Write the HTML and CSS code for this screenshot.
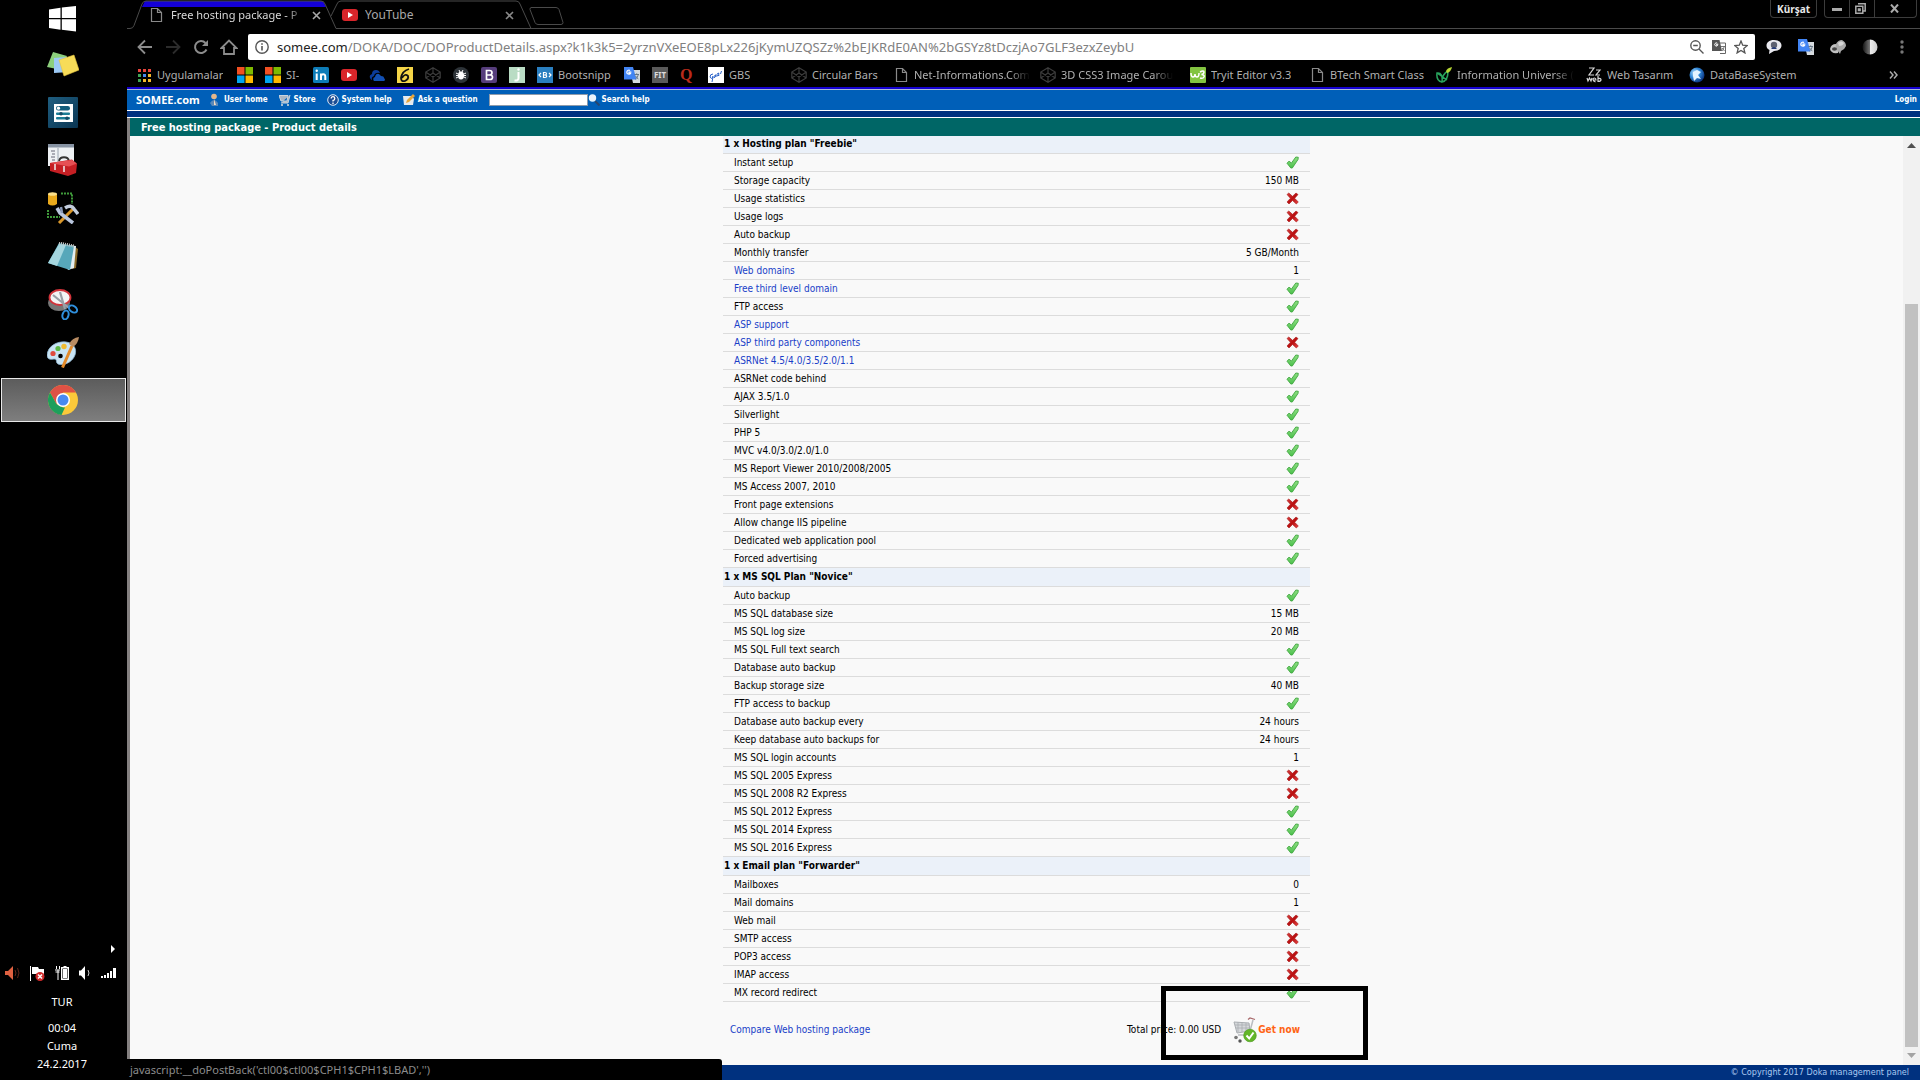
FILE: index.html
```
<!DOCTYPE html>
<html lang="tr">
<head>
<meta charset="utf-8">
<title>Free hosting package - Product details</title>
<link rel="stylesheet" href="styles.css">
</head>
<body>
<svg class="defs" aria-hidden="true">
  <defs>
    <linearGradient id="gTick" x1="0" y1="0" x2="0" y2="1"><stop offset="0" stop-color="#8fe083"/><stop offset="1" stop-color="#4cc04c"/></linearGradient>
    <linearGradient id="gCross" x1="0" y1="0" x2="1" y2="1"><stop offset="0" stop-color="#d84040"/><stop offset=".5" stop-color="#b80f10"/><stop offset="1" stop-color="#e84848"/></linearGradient>
    <linearGradient id="gPane" x1="0" y1="0" x2="1" y2="1"><stop offset="0" stop-color="#1f5e80"/><stop offset="1" stop-color="#0a3552"/></linearGradient>
    <radialGradient id="gGlobe" cx=".35" cy=".35" r=".7"><stop offset="0" stop-color="#bfe6ff"/><stop offset=".5" stop-color="#2e86d6"/><stop offset="1" stop-color="#0a2f78"/></radialGradient>
    <linearGradient id="gHalf"><stop offset="0" stop-color="#111"/><stop offset=".5" stop-color="#777"/><stop offset=".5" stop-color="#eee"/><stop offset="1" stop-color="#ccc"/></linearGradient>
  </defs>
  <symbol id="tick" viewBox="0 0 13 13"><path d="M1 7.2 3.2 5l2.1 2.2L9.800 1l2.500.3-.3 2.200L6.300 12H4.800z" fill="url(#gTick)" stroke="#3fa63f" stroke-width=".9" stroke-linejoin="round"/></symbol>
  <symbol id="cross" viewBox="0 0 13 13"><path d="M1 2.500 2.800 1 6.500 4.300 10 1l2 1.600L8.700 6.300 12.300 10l-2 2-3.800-3.500L3 12 1 10l3.400-3.700z" fill="url(#gCross)" stroke="#a81717" stroke-width=".6"/></symbol>
  <symbol id="page" viewBox="0 0 16 16"><path d="M3.500 1.500h6l4 4v9h-10zM9.500 1.500v4h4" fill="none" stroke="#8a8a8a" stroke-width="1.200"/></symbol>
  <symbol id="ms" viewBox="0 0 16 16"><path d="M0 0h7.500v7.500H0z" fill="#f25022"/><path d="M8.500 0H16v7.500H8.500z" fill="#7fba00"/><path d="M0 8.500h7.500V16H0z" fill="#00a4ef"/><path d="M8.500 8.500H16V16H8.500z" fill="#ffb900"/></symbol>
  <symbol id="yt" viewBox="0 0 16 16"><rect y="2" width="16" height="12" rx="3" fill="#d9252a"/><path d="M6 5l5 3-5 3z" fill="#fff"/></symbol>
  <symbol id="codepen" viewBox="0 0 16 16"><path d="M8 .8 15.200 5v6L8 15.200.8 11V5zM.8 5 8 10l7.200-5M.8 11 8 6l7.200 5M8 .8V6M8 10v5.200" fill="none" stroke="#3c3c3c" stroke-width="1.200"/></symbol>
  <symbol id="gtr" viewBox="0 0 16 16"><path d="M6 3h10v13H9z" fill="#d5dade"/><path d="M0 0h9l3.500 12.500H0z" fill="#4285f4"/><path d="M7.300 5H5v1.300h1.500A2 2 0 1 1 6 3.600" fill="none" stroke="#fff" stroke-width="1.200"/><path d="M10.500 7.500H15M12.700 6.300v1.200M14.200 7.500c-.3 2-1.200 3.500-2.800 4.700M11.400 8.800l2.900 3.400" fill="none" stroke="#607080" stroke-width=".9"/></symbol>
</svg>

<div class="screen">
  <aside class="taskbar">
    <nav class="apps" aria-label="Taskbar">
      <button class="app start" aria-label="Start"><svg width="27" height="26" viewBox="0 0 27 26" fill="#fff"><path d="M0 3.500 11.500 1.800V12H0zM12.800 1.600 27 0v12H12.800zM0 13.200h11.500v10.500L0 22zM12.800 13.200H27V25.500l-14.200-1.800z"/></svg></button>
      <button class="app" aria-label="Sticky notes"><svg width="32" height="26" viewBox="0 0 32 26"><path d="M6 1l14 4-5 14L0 16z" fill="#8ccf7c"/><path d="M7 7l13-1 2 15-15 1z" fill="#9cc9f5"/><path d="M12 9l15-5 5 15-15 6z" fill="#f7dc58" stroke="#e3c23c" stroke-width=".6"/></svg></button>
      <button class="app" aria-label="Settings"><svg width="30" height="31" viewBox="0 0 30 31"><rect width="30" height="31" rx="1" fill="url(#gPane)"/><rect x="6" y="7" width="19" height="18" fill="#fff"/><rect x="8" y="9" width="14" height="4.500" rx="2.200" fill="#125d7c"/><rect x="8" y="15.500" width="14" height="2.500" rx="1" fill="#1b7d96"/><rect x="8" y="20" width="14" height="2.500" rx="1" fill="#1b7d96"/><circle cx="10.500" cy="11.200" r="1.600" fill="#fff"/><circle cx="13" cy="16.700" r="1.800" fill="#134b66"/><circle cx="19" cy="21.200" r="1.800" fill="#134b66"/></svg></button>
      <button class="app" aria-label="Toolbox"><svg width="30" height="32" viewBox="0 0 30 32"><path d="M0 0h26v22H0z" fill="#eef1f4"/><path d="M0 0h26v3.500H0z" fill="#8793a3"/><path d="M3 7h4M4 10h3M3 13h4M4 16h3" stroke="#667" stroke-width="1"/><path d="M10 4v16" stroke="#9aa4b0"/><path d="M11 17c1-5 9-5 10 0" fill="none" stroke="#333" stroke-width="1.800"/><path d="M2 19l22-3.500L29 20l-1 9-8 3-18-5z" fill="#c51f24"/><path d="M2 19l19 3.500 8-3-5-3.500z" fill="#e65054"/><path d="M7 20v6M16 22v6" stroke="#eee" stroke-width="1.500"/></svg></button>
      <button class="app" aria-label="Database tools"><svg width="32" height="32" viewBox="0 0 32 32"><path d="M1 2v10q4.500 3 9 0V2z" fill="#e9a91c"/><ellipse cx="5.500" cy="2" rx="4.500" ry="1.800" fill="#fbe08a"/><path d="M14 1.500h11V12M1 18v7h12" fill="none" stroke="#3f9a3a" stroke-width="2" stroke-dasharray="2 1"/><path d="M12 31 26 17" stroke="#d8962a" stroke-width="3"/><path d="M18 16q6-4 9 1l4 5" fill="none" stroke="#c3cddd" stroke-width="3.500"/><path d="M10 16l3 5 13 10" fill="none" stroke="#b9c6de" stroke-width="3.500"/><path d="M14 15l1 6" stroke="#8898b8" stroke-width="2.500"/></svg></button>
      <button class="app" aria-label="Notepad"><svg width="30" height="29" viewBox="0 0 30 29"><path d="M24 3l6 4-2 19-4 1z" fill="#8a6a28"/><path d="M11 2l17 2-2 22-6 2z" fill="#e3eef0"/><path d="M11 1l15 3-4 24L0 21z" fill="#57a7ba"/><path d="M11 2l7 1-9 21-9-3z" fill="#a5d6df"/><path d="M11 1l15 3" stroke="#c9c9c9" stroke-width="3" stroke-dasharray="1 1"/></svg></button>
      <button class="app" aria-label="Snipping tool"><svg width="30" height="31" viewBox="0 0 30 31"><ellipse cx="11" cy="14" rx="11" ry="8" fill="#777"/><ellipse cx="12" cy="8.500" rx="10.500" ry="7.500" fill="#f4f4f4" stroke="#d2333a" stroke-width="1.800"/><path d="M5 6l16 13M12 3l5 17" stroke="#9a9fa6" stroke-width="2.200"/><ellipse cx="25" cy="20" rx="4.500" ry="3" transform="rotate(35 25 20)" fill="none" stroke="#2f8fdc" stroke-width="2"/><ellipse cx="17.500" cy="26" rx="3" ry="4.500" transform="rotate(15 17.500 26)" fill="none" stroke="#2f8fdc" stroke-width="2"/></svg></button>
      <button class="app" aria-label="Paint"><svg width="32" height="31" viewBox="0 0 32 31"><path d="M0 18C1 9 10 4 19 5c8 1 11 7 9 13-3 8-12 11-17 9-3-2 0-5-4-5-4 1-7 0-7-4z" fill="#c9e4f4" stroke="#8fb9d6" stroke-width=".8"/><circle cx="6" cy="16.500" r="2.600" fill="#df4b3e"/><circle cx="11" cy="11.500" r="2.600" fill="#5cb946"/><circle cx="17" cy="9.500" r="2.700" fill="#efbb32"/><circle cx="13.500" cy="19" r="2.300" fill="#000"/><path d="M15.500 30.500 25 9" stroke="#e38a2a" stroke-width="3"/><path d="M22 7q3-6 10-7-1 7-6 10z" fill="#b98c62"/></svg></button>
      <button class="app active" aria-label="Chrome"><svg width="30" height="30" viewBox="0 0 30 30"><circle cx="15" cy="15" r="15" fill="#fbc93a"/><path d="M2 7.500A15 15 0 0 1 28 7.500H15L8.500 19z" fill="#de5145"/><path d="M2 7.500 8.500 19 15 22.500h2L13.500 30A15 15 0 0 1 2 7.500z" fill="#1d9f5c"/><circle cx="15" cy="15" r="7" fill="#fff"/><circle cx="15" cy="15" r="5.500" fill="#4889f1"/></svg></button>
    </nav>
    <div class="tray">
      <button class="expand" aria-label="Show hidden icons"><svg width="4" height="8" viewBox="0 0 4 8"><path d="M0 0v8l4-4z" fill="#fff"/></svg></button>
      <div class="tray-icons">
        <svg width="15" height="14" viewBox="0 0 15 14"><path d="M0 5h3l5-5v14L3 9H0z" fill="#df6141"/><path d="M10 4q2 3 0 6M12.500 2q3 5 0 10" fill="none" stroke="#5a2418"/></svg>
        <svg width="15" height="15" viewBox="0 0 15 15"><path d="M.5 0v15" stroke="#fff"/><path d="M2 1h6l1 2h5v6H8L7 8H2z" fill="#fff"/><circle cx="10" cy="10.500" r="4.500" fill="#d12a2a"/><path d="M8 8.500l4 4M12 8.500l-4 4" stroke="#fff" stroke-width="1.500"/></svg>
        <svg width="14" height="14" viewBox="0 0 14 14"><path d="M1.500 0v3M4.500 0v3M0 4h5M3 4v10M.5 6h4" stroke="#fff" fill="none"/><path d="M6.700 1.700h6.600v11.600H6.700z" fill="none" stroke="#fff" stroke-width="1.400"/><path d="M8 3h4v9H8zM8.500 0h3v1h-3z" fill="#fff"/></svg>
        <svg width="12" height="14" viewBox="0 0 12 14"><path d="M0 4.500h2L6 0v14L2 9.500H0z" fill="#fff"/><path d="M9 4q2 3 0 6" fill="none" stroke="#ccc"/></svg>
        <svg width="15" height="10" viewBox="0 0 15 10" fill="#fff"><path d="M0 8h2v2H0zM3 7h2v3H3zM6 5h2v5H6zM9 3h2v7H9zM12 0h3v10h-3z"/></svg>
      </div>
      <p class="lang">TUR</p>
      <p class="clock">00:04<br>Cuma<br>24.2.2017</p>
    </div>
  </aside>

  <div class="browser">
    <header class="tabstrip">
      <svg class="tab-shapes" width="440" height="29" viewBox="0 0 440 29" fill="none" stroke="#4a4a4a"><path d="M18 1h178l3 6H15z" fill="#1400d8" stroke="none"/><path d="M0 28.500h3q3 0 4-3L15 4q1-3 4-3h175q3 0 4 3l11 24.500H440"/><path d="M204 16l6-12q1-3 4-3h175q3 0 4 3l11 24.500"/><path d="M404 7.500h25q2 0 3 2l4 13q0 2-2 2h-23q-2 0-3-2l-5-13q0-2 1-2z"/></svg>
      <div class="tab"><svg width="16" height="16"><use href="#page"/></svg><span class="tab-title fade">Free hosting package - P</span><button class="close" aria-label="Close tab"><svg width="9" height="9" viewBox="0 0 9 9"><path d="M1 1l7 7M8 1 1 8" stroke="#a8a8a8" stroke-width="1.600"/></svg></button></div>
      <div class="tab second"><svg width="16" height="16"><use href="#yt"/></svg><span class="tab-title dim">YouTube</span><button class="close" aria-label="Close tab"><svg width="9" height="9" viewBox="0 0 9 9"><path d="M1 1l7 7M8 1 1 8" stroke="#888" stroke-width="1.600"/></svg></button></div>
      <div class="strip-rest"></div>
      <div class="win-controls">
        <button class="profile">Kürşat</button>
        <div class="win-buttons">
          <button aria-label="Minimize"><svg width="10" height="10" viewBox="0 0 10 10"><path d="M0 4h10v3H0z" fill="#aaa"/></svg></button>
          <button aria-label="Restore"><svg width="11" height="11" viewBox="0 0 11 11" fill="none" stroke="#aaa" stroke-width="1.500"><path d="M3 .8h7.200V8H8M.8 3.300h7v7h-7zM3.500 6h1.600v1.600H3.500z"/></svg></button>
          <button aria-label="Close"><svg width="9" height="9" viewBox="0 0 9 9"><path d="M1 .5l7 8M8 .5l-7 8" stroke="#aaa" stroke-width="2"/></svg></button>
        </div>
      </div>
    </header>

    <div class="toolbar">
      <div class="nav-buttons">
        <button aria-label="Back"><svg width="16" height="16" viewBox="0 0 16 16" fill="none" stroke="#8c8c8c" stroke-width="1.800"><path d="M15 8H2M8 1.500 1.500 8 8 14.500"/></svg></button>
        <button aria-label="Forward"><svg width="16" height="16" viewBox="0 0 16 16" fill="none" stroke="#2c2c2c" stroke-width="1.800"><path d="M1 8h13M8 1.500 14.500 8 8 14.500"/></svg></button>
        <button aria-label="Reload"><svg width="16" height="16" viewBox="0 0 16 16" fill="none" stroke="#8c8c8c" stroke-width="2"><path d="M13.500 10.500A6 6 0 1 1 12.500 4"/><path d="M15 1v6H9z" fill="#8c8c8c" stroke="none"/></svg></button>
        <button aria-label="Home"><svg width="18" height="16" viewBox="0 0 18 16" fill="none" stroke="#8c8c8c" stroke-width="1.800"><path d="M1.500 9 9 1.500 16.500 9H14v6H4V9z"/></svg></button>
      </div>
      <div class="omnibox">
        <svg width="14" height="14" viewBox="0 0 14 14" fill="none" stroke="#555" stroke-width="1.400"><circle cx="7" cy="7" r="6.200"/><path d="M7 6v4.500M7 3.300v1.500" stroke-width="1.600"/></svg>
        <span class="url"><b>somee.com</b>/DOKA/DOC/DOProductDetails.aspx?k1k3k5=2yrznVXeEOE8pLx226jKymUZQSZz%2bEJKRdE0AN%2bGSYz8tDczjAo7GLF3ezxZeybU</span>
        <svg width="14" height="14" viewBox="0 0 14 14" fill="none" stroke="#555" stroke-width="1.400"><circle cx="5.500" cy="5.500" r="4.700"/><path d="M9 9l4.500 4.500M3.200 5.500h4.600"/></svg>
        <svg width="14" height="14" viewBox="0 0 14 14"><path d="M5 3h8.500v10.500H8" fill="none" stroke="#666"/><path d="M0 0h7.500l2.500 11H0z" fill="#555"/><path d="M6.300 4.300H4.500v1h1.200A1.600 1.600 0 1 1 5.300 3.200" fill="none" stroke="#fff"/><path d="M9 6.500h4M12 6.500c0 2-1 3.500-2 4.500M10 8l2.500 3" fill="none" stroke="#666" stroke-width=".9"/></svg>
        <svg width="14" height="14" viewBox="0 0 14 14" fill="none" stroke="#555" stroke-width="1.300"><path d="M7 1l1.700 4.200 4.600.3-3.500 2.900 1.100 4.500L7 10.400l-3.900 2.500 1.100-4.500L.7 5.500l4.600-.3z"/></svg>
      </div>
      <div class="extensions">
        <svg width="16" height="16" viewBox="0 0 16 16"><path d="M8 1c5 0 7.500 2.500 7.500 5.500S13 12 8 12l-5 3 .5-4C1 10 .5 8 .5 6.500.5 3.500 3 1 8 1z" fill="#e8e8ee"/><circle cx="8" cy="6" r="3.200" fill="#5d6070"/><path d="M5 10q3-4 6 0z" fill="#243a78"/></svg>
        <svg width="16" height="16"><use href="#gtr"/></svg>
        <svg width="16" height="16" viewBox="0 0 16 16"><path d="M0 10q1-5 6-5l4 3-2 6q-7 1-8-4z" fill="#c0c0c0"/><path d="M6 5q2-4 6-4 4 2 4 6-1 3-5 5l-1 3-2-3q-3-2-2-7z" fill="#aaa"/><path d="M8 4q3-3 6 0-1 3-5 3z" fill="#d6d6d6"/><ellipse cx="4.500" cy="10" rx="2.500" ry="1.700" fill="#444"/></svg>
        <svg width="16" height="16" viewBox="0 0 16 16"><circle cx="8" cy="8" r="7.500" fill="url(#gHalf)"/></svg>
        <button aria-label="Menu"><svg width="4" height="14" viewBox="0 0 4 14" fill="#777"><circle cx="2" cy="2" r="1.700"/><circle cx="2" cy="7" r="1.700"/><circle cx="2" cy="12" r="1.700"/></svg></button>
      </div>
    </div>

    <nav class="bookmarks" aria-label="Bookmarks">
      <a href="#"><svg width="15" height="15" viewBox="0 0 15 15"><path d="M1 1h3v3H1zM6 1h3v3H6zM11 1h3v3h-3z" fill="#e8453c"/><path d="M1 6h3v3H1zM1 11h3v3H1z" fill="#3fa757"/><path d="M6 6h3v3H6z" fill="#4688f1"/><path d="M11 6h3v3h-3zM6 11h3v3H6zM11 11h3v3h-3z" fill="#f6b82a"/></svg><span>Uygulamalar</span></a>
      <a href="#" aria-label="Microsoft"><svg width="16" height="16"><use href="#ms"/></svg></a>
      <a href="#"><svg width="16" height="16"><use href="#ms"/></svg><span>SI-</span></a>
      <a href="#" aria-label="LinkedIn"><svg width="16" height="16" viewBox="0 0 16 16"><rect width="16" height="16" rx="1.500" fill="#0d7cb8"/><path d="M3.700 6.500V13M8 13V6.500M8 9.500q0-2.200 2.200-2.200T12.300 10v3" fill="none" stroke="#fff" stroke-width="2"/><circle cx="3.700" cy="3.800" r="1.200" fill="#fff"/></svg></a>
      <a href="#" aria-label="YouTube"><svg width="16" height="16"><use href="#yt"/></svg></a>
      <a href="#" aria-label="OneDrive"><svg width="16" height="16" viewBox="0 0 16 16"><path d="M1 11q-1-3 2-4 0-4 4-4 3 0 4 3-5-1-6 3-3 1-2 4-1 0-2-2z" fill="#0b3c9c"/><path d="M5 14q-2-3 1-4 1-4 4-3l2 2q3 0 3 2 2 2 0 3z" fill="#1250b4"/></svg></a>
      <a href="#" aria-label="Altı"><svg width="16" height="16" viewBox="0 0 16 16"><path d="M0 0h16v16H0z" fill="#f5d547"/><path d="M12 2Q5 4 4 11q0 4 4 3 4-2 3-5-3-3-6 2" fill="none" stroke="#111" stroke-width="1.800"/></svg></a>
      <a href="#" aria-label="CodePen"><svg width="16" height="16"><use href="#codepen"/></svg></a>
      <a href="#" aria-label="Bug"><svg width="16" height="16" viewBox="0 0 16 16"><circle cx="8" cy="8" r="8" fill="#2d3338"/><ellipse cx="8" cy="8.500" rx="3" ry="4" fill="#fff"/><path d="M3 6l10 5M13 6 3 11M3 8.500h10M6 3l1 2M10 3 9 5" stroke="#fff"/></svg></a>
      <a href="#" aria-label="Bootstrap"><svg width="16" height="16" viewBox="0 0 16 16"><rect width="16" height="16" rx="2" fill="#563d7c"/><path d="M5.500 3.500h3q2.500 0 2.500 2.200T8.500 8h-3 3.300q2.700 0 2.700 2.300t-2.700 2.200H5.500z" fill="none" stroke="#fff" stroke-width="1.700"/></svg></a>
      <a href="#" aria-label="jsFiddle"><svg width="16" height="16" viewBox="0 0 16 16"><path d="M0 0h16v16H0z" fill="#b9dcc4"/><path d="M9.500 5v6q0 3-4 2.500" fill="none" stroke="#fff" stroke-width="2"/><circle cx="9.500" cy="2.500" r="1.200" fill="#fff"/></svg></a>
      <a href="#"><svg width="16" height="16" viewBox="0 0 16 16"><path d="M0 0h16v16H0z" fill="#2a7fc0"/><path d="M4 6 2 8l2 2M12 6l2 2-2 2M6.500 5.500H8q1.500 0 1.500 1.200T8 8h-1.500H8q1.700 0 1.700 1.200T8 10.500H6.500z" fill="none" stroke="#fff" stroke-width="1.200"/></svg><span>Bootsnipp</span></a>
      <a href="#" aria-label="Translate"><svg width="16" height="16"><use href="#gtr"/></svg></a>
      <a href="#" aria-label="FIT"><span class="fit">FIT</span></a>
      <a href="#" aria-label="Q"><span class="q">Q</span></a>
      <a href="#"><svg width="16" height="16" viewBox="0 0 16 16"><path d="M0 0h16v16H0z" fill="#fff"/><path d="M5 7Q2 7 2 10q1 3 3 0l-1-.500M5 10l-1 5M7 8.500q-2 1-1 2t2-3v2.500M9 7l2-1-1.500 3 2-1M12.500 7l1-3" fill="none" stroke="#2a62c8"/></svg><span>GBS</span></a>
      <a href="#"><svg width="16" height="16"><use href="#codepen"/></svg><span>Circular Bars</span></a>
      <a href="#"><svg width="16" height="16"><use href="#page"/></svg><span class="fade">Net-Informations.Com</span></a>
      <a href="#"><svg width="16" height="16"><use href="#codepen"/></svg><span class="fade">3D CSS3 Image Carou</span></a>
      <a href="#"><svg width="16" height="16" viewBox="0 0 16 16"><rect width="16" height="16" rx="1" fill="#83c441"/><path d="M1 6q0 4 2 4t2-3q0 3 2 3t2-4M10 5q4-2 4 0t-2.500 2.500Q15 8 14 10t-4 1" fill="none" stroke="#fff" stroke-width="1.500"/></svg><span>Tryit Editor v3.3</span></a>
      <a href="#"><svg width="16" height="16"><use href="#page"/></svg><span>BTech Smart Class</span></a>
      <a href="#"><svg width="16" height="16" viewBox="0 0 16 16"><path d="M1 6q6-1 5 9Q0 14 1 6zM12 4q0 10-6 11 0-8 6-11zM1 6l10 7" fill="none" stroke="#28a35c" stroke-width="1.500"/><path d="M10 4q1-3 6-4-1 5-5 6z" fill="#b6d633"/></svg><span class="fade">Information Universe (</span></a>
      <a href="#"><svg width="16" height="16" viewBox="0 0 16 16" fill="none" stroke="#d8d8d8" stroke-width="1.200"><path d="M3 1h5L3 8h5M10 3h4l-4 5h4M1 11l1 3 1.500-3L5 14l1-3M7 13h3q0-2-1.500-2T7 12.500 9.500 15M12 9v5.500q3 0 3-1.700T12 11.500"/></svg><span>Web Tasarım</span></a>
      <a href="#"><svg width="16" height="16" viewBox="0 0 16 16"><circle cx="8" cy="8" r="7.500" fill="url(#gGlobe)"/><path d="M4 5l4-2 4 2-3 3 3 4-4-1-3 3-1-5z" fill="#e4f4ff"/></svg><span>DataBaseSystem</span></a>
      <button class="more" aria-label="More bookmarks"><svg width="9" height="8" viewBox="0 0 9 8" fill="none" stroke="#aaa" stroke-width="1.500"><path d="M1 .5 4 4 1 7.500M5 .5 8 4 5 7.500"/></svg></button>
    </nav>

    <div class="site-nav">
      <a class="brand" href="#">SOMEE.com</a>
      <a href="#"><svg width="12" height="13" viewBox="0 0 12 13"><circle cx="5" cy="3.500" r="2.800" fill="#e3b78c"/><path d="M1 10q4-6 8 0v3H3z" fill="#5a88b8"/><path d="M5 6l2 6H5z" fill="#f3dcc5"/></svg>User home</a>
      <a href="#"><svg width="12" height="12" viewBox="0 0 12 12"><path d="M0 1.500h9l-1 5.500H2zM2 9h7l2-8" fill="#a8b5c4" stroke="#c9d4df"/><circle cx="3" cy="11" r="1" fill="#ddd"/><circle cx="9" cy="11" r="1" fill="#ddd"/></svg>Store</a>
      <a href="#"><svg width="12" height="12" viewBox="0 0 12 12"><circle cx="6" cy="6" r="5.300" fill="#1c4d94" stroke="#dce8f4"/><path d="M4.200 4.500q0-1.800 1.800-1.800T7.800 4.500 6 6.500v1M6 8.500V10" fill="none" stroke="#fff" stroke-width="1.300"/></svg>System help</a>
      <a href="#"><svg width="12" height="12" viewBox="0 0 12 12"><path d="M0 2h9l2 3-1 6H1z" fill="#e7eaee"/><path d="M3 9l1-3 6-6 2 2-6 6z" fill="#e7a63a"/></svg>Ask a question</a>
      <form class="search"><input type="text" aria-label="Search help"><button type="button"><svg width="12" height="12" viewBox="0 0 12 12"><path d="M7 7l4.500 4.500" stroke="#27466e" stroke-width="2"/><circle cx="4.500" cy="4" r="3.700" fill="#e8f3fc"/></svg>Search help</button></form>
      <a class="login" href="#">Login</a>
    </div>
    <div class="band"></div>

    <div class="page">
      <h1>Free hosting package - Product details</h1>
      <div class="viewport">
        <main>
          <div class="package">
            <table>
              <tbody>
                <tr><th colspan="2">1 x Hosting plan "Freebie"</th></tr>
                <tr><td>Instant setup</td><td><svg class="mark"><use href="#tick"/></svg></td></tr>
                <tr><td>Storage capacity</td><td>150 MB</td></tr>
                <tr><td>Usage statistics</td><td><svg class="mark"><use href="#cross"/></svg></td></tr>
                <tr><td>Usage logs</td><td><svg class="mark"><use href="#cross"/></svg></td></tr>
                <tr><td>Auto backup</td><td><svg class="mark"><use href="#cross"/></svg></td></tr>
                <tr><td>Monthly transfer</td><td>5 GB/Month</td></tr>
                <tr><td><a href="#">Web domains</a></td><td>1</td></tr>
                <tr><td><a href="#">Free third level domain</a></td><td><svg class="mark"><use href="#tick"/></svg></td></tr>
                <tr><td>FTP access</td><td><svg class="mark"><use href="#tick"/></svg></td></tr>
                <tr><td><a href="#">ASP support</a></td><td><svg class="mark"><use href="#tick"/></svg></td></tr>
                <tr><td><a href="#">ASP third party components</a></td><td><svg class="mark"><use href="#cross"/></svg></td></tr>
                <tr><td><a href="#">ASRNet 4.5/4.0/3.5/2.0/1.1</a></td><td><svg class="mark"><use href="#tick"/></svg></td></tr>
                <tr><td>ASRNet code behind</td><td><svg class="mark"><use href="#tick"/></svg></td></tr>
                <tr><td>AJAX 3.5/1.0</td><td><svg class="mark"><use href="#tick"/></svg></td></tr>
                <tr><td>Silverlight</td><td><svg class="mark"><use href="#tick"/></svg></td></tr>
                <tr><td>PHP 5</td><td><svg class="mark"><use href="#tick"/></svg></td></tr>
                <tr><td>MVC v4.0/3.0/2.0/1.0</td><td><svg class="mark"><use href="#tick"/></svg></td></tr>
                <tr><td>MS Report Viewer 2010/2008/2005</td><td><svg class="mark"><use href="#tick"/></svg></td></tr>
                <tr><td>MS Access 2007, 2010</td><td><svg class="mark"><use href="#tick"/></svg></td></tr>
                <tr><td>Front page extensions</td><td><svg class="mark"><use href="#cross"/></svg></td></tr>
                <tr><td>Allow change IIS pipeline</td><td><svg class="mark"><use href="#cross"/></svg></td></tr>
                <tr><td>Dedicated web application pool</td><td><svg class="mark"><use href="#tick"/></svg></td></tr>
                <tr><td>Forced advertising</td><td><svg class="mark"><use href="#tick"/></svg></td></tr>
              </tbody>
              <tbody>
                <tr><th colspan="2">1 x MS SQL Plan "Novice"</th></tr>
                <tr><td>Auto backup</td><td><svg class="mark"><use href="#tick"/></svg></td></tr>
                <tr><td>MS SQL database size</td><td>15 MB</td></tr>
                <tr><td>MS SQL log size</td><td>20 MB</td></tr>
                <tr><td>MS SQL Full text search</td><td><svg class="mark"><use href="#tick"/></svg></td></tr>
                <tr><td>Database auto backup</td><td><svg class="mark"><use href="#tick"/></svg></td></tr>
                <tr><td>Backup storage size</td><td>40 MB</td></tr>
                <tr><td>FTP access to backup</td><td><svg class="mark"><use href="#tick"/></svg></td></tr>
                <tr><td>Database auto backup every</td><td>24 hours</td></tr>
                <tr><td>Keep database auto backups for</td><td>24 hours</td></tr>
                <tr><td>MS SQL login accounts</td><td>1</td></tr>
                <tr><td>MS SQL 2005 Express</td><td><svg class="mark"><use href="#cross"/></svg></td></tr>
                <tr><td>MS SQL 2008 R2 Express</td><td><svg class="mark"><use href="#cross"/></svg></td></tr>
                <tr><td>MS SQL 2012 Express</td><td><svg class="mark"><use href="#tick"/></svg></td></tr>
                <tr><td>MS SQL 2014 Express</td><td><svg class="mark"><use href="#tick"/></svg></td></tr>
                <tr><td>MS SQL 2016 Express</td><td><svg class="mark"><use href="#tick"/></svg></td></tr>
              </tbody>
              <tbody>
                <tr><th colspan="2">1 x Email plan "Forwarder"</th></tr>
                <tr><td>Mailboxes</td><td>0</td></tr>
                <tr><td>Mail domains</td><td>1</td></tr>
                <tr><td>Web mail</td><td><svg class="mark"><use href="#cross"/></svg></td></tr>
                <tr><td>SMTP access</td><td><svg class="mark"><use href="#cross"/></svg></td></tr>
                <tr><td>POP3 access</td><td><svg class="mark"><use href="#cross"/></svg></td></tr>
                <tr><td>IMAP access</td><td><svg class="mark"><use href="#cross"/></svg></td></tr>
                <tr><td>MX record redirect</td><td><svg class="mark"><use href="#tick"/></svg></td></tr>
              </tbody>
            </table>
            <div class="order">
              <a class="compare" href="#">Compare Web hosting package</a>
              <span class="total">Total price: 0.00 USD</span>
              <a class="get" href="#"><svg width="24" height="26" viewBox="0 0 24 26"><path d="M1 5l15 1 1 8-13 2z" fill="#d5d8db" stroke="#a9adb1"/><path d="M2 8h14M3 11h14M5 5v10M9 5v10M13 6v8" stroke="#a9adb1" stroke-width=".8"/><path d="M20 3l-3 11q-1 4-6 4H5" fill="none" stroke="#b8bcc0" stroke-width="1.500"/><path d="M15 2.500 17 1l5 1.500" fill="none" stroke="#a8686a" stroke-width="1.300"/><circle cx="3" cy="20.500" r="1.800" fill="#777"/><circle cx="7" cy="24" r="1.700" fill="#555"/><circle cx="17" cy="18.500" r="6.300" fill="#62b628" stroke="#48951c" stroke-width=".6"/><path d="M13.500 18.500l2.700 3 4.300-6" fill="none" stroke="#fff" stroke-width="2"/></svg>Get now</a>
            </div>
            <div class="highlight"></div>
          </div>
        </main>
        <div class="scrollbar">
          <svg width="9" height="5" viewBox="0 0 9 5"><path d="M0 5 4.500 0 9 5z" fill="#505050"/></svg>
          <div class="thumb"></div>
          <svg width="9" height="5" viewBox="0 0 9 5"><path d="M0 0l4.500 5L9 0z" fill="#a3a3a3"/></svg>
        </div>
      </div>
    </div>
    <footer>© Copyright 2017 Doka management panel</footer>
    <div class="status">javascript:__doPostBack('ctl00$ctl00$CPH1$CPH1$LBAD','')</div>
  </div>
</div>
</body>
</html>
```
FILE: styles.css
```
* { box-sizing: border-box; }

body {
  margin: 0;
  background: #000;
  font-family: "Noto Sans", "Open Sans", sans-serif;
  font-size: 11px;
}

button {
  padding: 0;
  border: 0;
  background: none;
  color: inherit;
  font: inherit;
}

a { color: inherit; text-decoration: none; }
p { margin: 0; }
svg { display: block; flex: none; }
.defs { position: absolute; width: 0; height: 0; }

.screen { display: flex; min-height: 100vh; }

/* Desktop taskbar */
.taskbar {
  display: flex;
  flex: none;
  flex-direction: column;
  justify-content: space-between;
  width: 127px;
  color: #fff;
}

.apps { display: flex; flex-direction: column; gap: 4px; padding: 0 1px; }
.app { display: flex; align-items: center; justify-content: center; height: 44px; padding-right: 2px; }
.app.start { height: 38px; }
.app.active { border: 1px solid #e8e8e8; background: linear-gradient(#5c5c5c, #7e7e7e); }

.tray { display: flex; flex-direction: column; padding: 0 3px 7px 0; text-align: center; }
.expand { align-self: flex-end; margin-right: 9px; }
.tray-icons { display: flex; align-items: center; justify-content: space-between; height: 16px; margin: 12px 8px 12px 5px; }
.lang { line-height: 18px; }
.clock { margin-top: 8px; line-height: 18px; }

/* Browser frame */
.browser { position: relative; display: flex; flex: 1; flex-direction: column; min-width: 0; }

.tabstrip { position: relative; display: flex; height: 29px; }
.tab-shapes { position: absolute; top: 0; left: 0; }
.tab { position: relative; display: flex; align-items: center; width: 204px; padding: 1px 10px 0 21px; color: #d8d8d8; }
.tab.second { width: 236px; padding: 1px 53px 0 11px; }
.tab-title { flex: 1; margin: 0 6px 0 7px; overflow: hidden; line-height: 18px; white-space: nowrap; }
.tab-title.dim { color: #a8a8a8; font-size: 12px; }
.fade { -webkit-mask-image: linear-gradient(to left, transparent, #000 20px); mask-image: linear-gradient(to left, transparent, #000 20px); }
.strip-rest { flex: 1; border-bottom: 1px solid #4a4a4a; }
.win-controls { display: flex; align-items: flex-start; gap: 7px; padding-right: 3px; border-bottom: 1px solid #4a4a4a; }
.profile { width: 47px; height: 18px; border: 1px solid #3c3c3c; border-top: 0; border-radius: 0 0 4px 4px; color: #e8e8e8; font-size: 10px; font-weight: 700; line-height: 16px; }
.win-buttons { display: grid; grid-template-columns: 24px 25px 1fr; width: 93px; height: 18px; border: 1px solid #3c3c3c; border-top: 0; border-radius: 0 0 4px 4px; }
.win-buttons button { display: flex; align-items: center; justify-content: center; }
.win-buttons button + button { padding-right: 3px; border-left: 1px solid #3c3c3c; }

.toolbar { display: flex; align-items: center; height: 36px; }
.nav-buttons { display: grid; grid-template-columns: repeat(4, 28px); flex: none; width: 121px; padding-left: 4px; }
.nav-buttons button { display: flex; justify-content: center; }
.omnibox { display: flex; flex: 1; align-items: center; gap: 8px; min-width: 0; height: 26px; padding: 0 7px; border-radius: 2px; background: #fff; font-size: 13px; }
.url { flex: 1; overflow: hidden; color: #808080; line-height: 20px; white-space: nowrap; }
.url b { color: #222; font-weight: 400; }
.extensions { display: flex; align-items: center; gap: 16px; padding: 0 16px 0 11px; }
.extensions button { margin-left: 6px; }

.bookmarks {
  display: grid;
  grid-template-columns: 100px 28px 48px repeat(8, 28px) 87px 28px 28px 28px 83px 102px 147px 150px 119px 127px 150px 103px 1fr 31px;
  align-items: center;
  height: 20px;
  margin-bottom: 2px;
  padding-left: 10px;
  color: #b0b0b0;
}
.bookmarks a { display: flex; align-items: center; gap: 5px; min-width: 0; padding-right: 8px; line-height: 18px; white-space: nowrap; }
.bookmarks span { overflow: hidden; }
.bookmarks .fit { flex: none; width: 16px; background: #5a5a5a; color: #ddd; font-size: 8px; font-weight: 700; line-height: 16px; text-align: center; }
.bookmarks .q { flex: none; width: 16px; color: #b92b1b; font-family: "Liberation Serif", serif; font-size: 16px; font-weight: 700; line-height: 16px; }

/* Site header */
.site-nav {
  display: flex;
  align-items: center;
  height: 23px;
  padding: 0 3px 0 9px;
  border-top: 2px solid #1400d0;
  background: #005fb8;
  box-shadow: inset 0 1px #a8b8d8;
  color: #fff;
  font-family: "DejaVu Sans Condensed", "DejaVu Sans", sans-serif;
  font-size: 8px;
  font-weight: 700;
}
.site-nav a { display: flex; flex: none; align-items: center; gap: 3px; margin-right: 11px; }
.site-nav .brand { width: 62px; font-family: "Noto Sans", sans-serif; font-size: 11px; }
.search { display: flex; align-items: center; }
.search input { width: 99px; height: 12px; padding: 0 2px; border: 1px solid #8e9bab; background: #fff; font-size: 8px; }
.search button { display: flex; align-items: center; gap: 2px; }
.site-nav .login { margin: 0 0 0 auto; }
.band { height: 8px; border: solid #fff; border-width: 1px 0; background: #00317f; }

/* Page body */
.page { display: flex; flex: 1; flex-direction: column; border-left: 3px solid #848080; background: #f9f9f9; }
h1 { margin: 0; padding: 1px 0 0 11px; background: #006666; color: #fff; font-family: "DejaVu Sans Condensed", "DejaVu Sans", sans-serif; font-size: 11px; font-weight: 700; line-height: 17px; }
.viewport { display: flex; flex: 1; }
main { flex: 1; font-family: "DejaVu Sans Condensed", "DejaVu Sans", sans-serif; font-size: 10px; }
.package { position: relative; width: 587px; margin: 0 auto; }
table { width: 100%; border-collapse: separate; border-spacing: 0; }
th { height: 19px; padding: 0 0 0 1px; border-bottom: 1px solid #dcdcdc; background: #ebf1f9; line-height: 18px; text-align: left; }
tbody:first-child th { height: 18px; padding-bottom: 1px; line-height: 16px; }
td { height: 18px; padding: 0 11px; border-bottom: 1px solid #dcdcdc; line-height: 17px; }
td:last-child { text-align: right; }
td a, .compare { color: #1a3fc8; }
.mark { width: 13px; height: 13px; margin-left: auto; }

.order { display: flex; align-items: center; height: 55px; padding: 0 10px 0 7px; }
.total { margin-left: auto; }
.get { display: flex; align-items: center; gap: 1px; margin-left: 12px; color: #ff6414; font-weight: 700; }

.highlight { position: absolute; top: 850px; left: 438px; width: 207px; height: 74px; border: 5px solid #000; }

.scrollbar { display: flex; flex: none; flex-direction: column; align-items: center; justify-content: space-between; width: 17px; padding: 7px 0; background: #f1f1f1; }
.thumb { flex: 1; width: 13px; margin: 156px 0 6px; background: #c1c1c1; }

footer { padding-right: 11px; background: #00317f; color: #a9c8f0; font-family: "DejaVu Sans Condensed", "DejaVu Sans", sans-serif; font-size: 9px; line-height: 15px; text-align: right; }

.status { position: absolute; bottom: 0; left: 0; width: 595px; padding-left: 3px; border-radius: 0 3px 0 0; background: #000; color: #8c8c8c; line-height: 21px; }
```
